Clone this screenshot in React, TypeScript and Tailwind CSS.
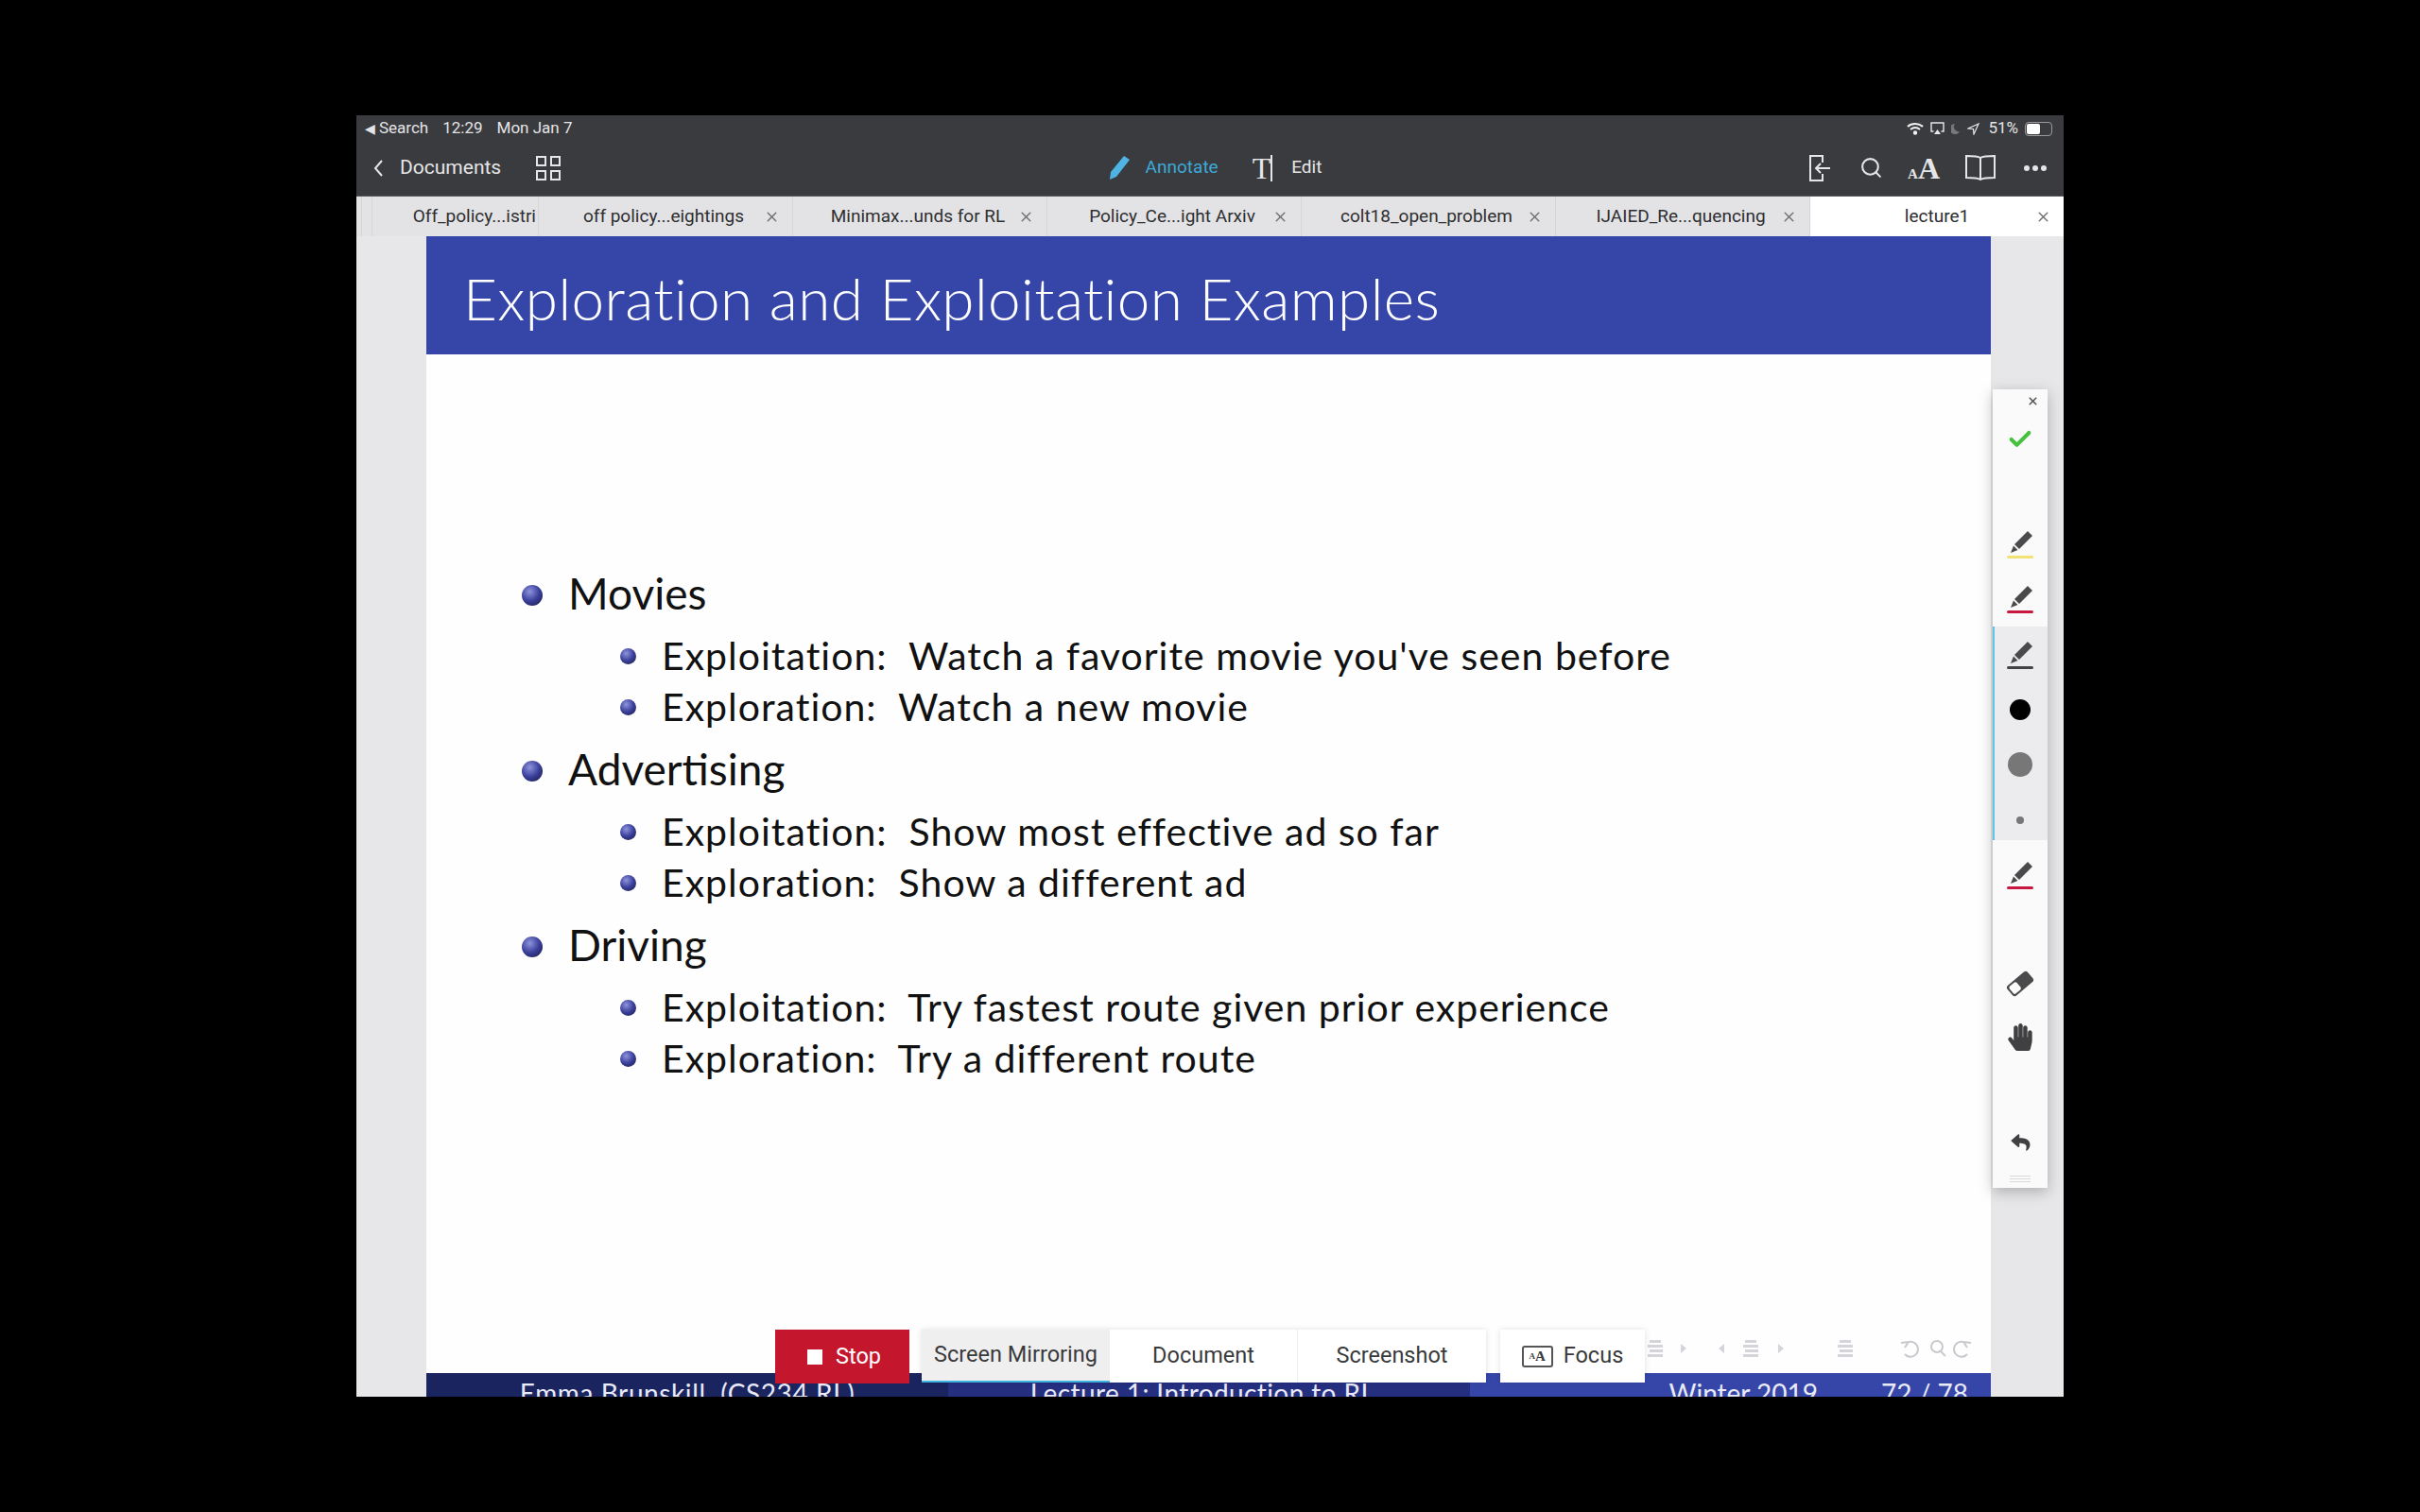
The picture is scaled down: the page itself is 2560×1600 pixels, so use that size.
import { Check, Search, X } from "lucide-react";
import { FaHandPaper, FaReply } from "react-icons/fa";

const TABS = ["off policy...eightings", "Minimax...unds for RL", "Policy_Ce...ight Arxiv", "colt18_open_problem", "IJAIED_Re...quencing"];

const SECTIONS = [
  { title: "Movies", items: ["Exploitation:  Watch a favorite movie you've seen before", "Exploration:  Watch a new movie"] },
  { title: "Advertising", items: ["Exploitation:  Show most effective ad so far", "Exploration:  Show a different ad"] },
  { title: "Driving", items: ["Exploitation:  Try fastest route given prior experience", "Exploration:  Try a different route"] },
];

function Pen({ line }: { line: string }) {
  return (
    <div className="flex flex-col items-center">
      <svg width="26" height="26" viewBox="0 0 26 26" className="ml-[2px]">
        <path d="M20 1 L25 6 L11 20 L6 15 Z" fill="#4a4a4d" />
        <path d="M5 16.5 L9.5 21 L2 24 Z" fill="#4a4a4d" />
      </svg>
      <div className={"mt-[1px] h-[3px] w-[28px] rounded-full " + line} />
    </div>
  );
}

function Ball({ big }: { big?: boolean }) {
  return (
    <span
      className={
        "mt-[3px] shrink-0 rounded-full bg-[radial-gradient(circle_at_38%_32%,#8e94dc,#3a3f9a_50%,#14173f)] " +
        (big ? "h-[22px] w-[22px]" : "h-[17px] w-[17px]")
      }
    />
  );
}

function Lines({ x }: { x: number }) {
  return (
    <g fill="#d4d4da">
      <rect x={x} y="5" width="12" height="3" />
      <rect x={x - 2} y="10" width="16" height="3" />
      <rect x={x} y="15" width="14" height="3" />
      <rect x={x - 2} y="20" width="16" height="3" />
    </g>
  );
}

export default function App() {
  return (
    <div className="flex h-screen items-center justify-center bg-black font-['Roboto',sans-serif]">
      <div className="relative flex h-[1356px] w-[1806px] flex-col overflow-hidden bg-[#e7e7e9]">
        {/* ios status bar */}
        <div className="flex h-[26px] items-center justify-between bg-[#3a3b3e] pl-[9px] pr-[12px] pt-[2px] text-[17px] text-[#e4e4e6]">
          <div className="flex items-center gap-[15px]">
            <span className="flex items-center gap-[4px]">
              <span className="text-[14px]">◀</span>Search
            </span>
            <span>12:29</span>
            <span>Mon Jan 7</span>
          </div>
          <div className="flex items-center gap-[7px]">
            <svg width="18" height="14" viewBox="0 0 18 14" fill="none" stroke="#f0f0f0" strokeWidth="2">
              <path d="M1 5 C5 1 13 1 17 5" />
              <path d="M4 8 C7 5.5 11 5.5 14 8" />
              <circle cx="9" cy="11.5" r="1.2" fill="#f0f0f0" />
            </svg>
            <svg width="15" height="14" viewBox="0 0 15 14" fill="none" stroke="#e8e8e8" strokeWidth="1.4">
              <path d="M3.5 10 H1 V1 H14 V10 H11.5" />
              <path d="M7.5 8 L11 13 H4 Z" fill="#e8e8e8" stroke="none" />
            </svg>
            <svg width="10" height="12" viewBox="0 0 10 12">
              <path d="M4 1 A5.5 5.5 0 1 0 9 9 A5 5 0 0 1 4 1 Z" fill="#77787b" />
            </svg>
            <svg width="13" height="13" viewBox="0 0 13 13" fill="none" stroke="#e8e8e8" strokeWidth="1.2">
              <path d="M12 1 L1 6 L6.5 6.5 L7 12 Z" />
            </svg>
            <span className="ml-[2px]">51%</span>
            <div className="flex h-[15px] w-[29px] items-center rounded-[4px] border border-[#9a9a9c] p-[1px]">
              <div className="h-full w-[14px] rounded-[2px] bg-white" />
            </div>
          </div>
        </div>

        {/* nav bar */}
        <div className="flex h-[59px] items-center bg-[#3a3b3e] text-[#e6e6e8]">
          <div className="flex flex-1 items-center pl-[17px]">
            <svg width="12" height="20" viewBox="0 0 12 20" fill="none" stroke="#e6e6e8" strokeWidth="2">
              <path d="M10 2 L3 10 L10 18" />
            </svg>
            <span className="ml-[17px] text-[21px]">Documents</span>
            <div className="ml-[37px] grid grid-cols-2 gap-[4px]">
              {[0, 1, 2, 3].map((i) => (
                <div key={i} className="h-[11px] w-[11px] border-2 border-[#e6e6e8]" />
              ))}
            </div>
          </div>
          <div className="ml-[11px] flex items-center">
            <svg width="24" height="27" viewBox="0 0 24 27">
              <path d="M17 1 L23 5 L9 23 L2 26 L3 18 Z" fill="#4fb4e4" />
            </svg>
            <span className="ml-[16px] text-[19px] text-[#3ea9d8]">Annotate</span>
            <div className="ml-[36px] flex items-center">
              <span className="font-['Liberation_Serif',serif] text-[32px] leading-none">T</span>
              <div className="h-[28px] w-[2px] bg-[#e6e6e8]" />
            </div>
            <span className="ml-[20px] text-[19px]">Edit</span>
          </div>
          <div className="flex flex-1 items-center justify-end pr-[18px]">
            <svg width="24" height="30" viewBox="0 0 24 30" fill="none" stroke="#e6e6e8" strokeWidth="2">
              <path d="M15 9 V2 H2 V28 H15 V21" />
              <path d="M23 15 H8 M13 10 L8 15 L13 20" />
            </svg>
            <Search className="ml-[30px] h-[25px] w-[25px]" strokeWidth={2} />
            <div className="ml-[26px] flex items-baseline font-['Liberation_Serif',serif] font-bold leading-none">
              <span className="text-[15px]">A</span>
              <span className="text-[32px]">A</span>
            </div>
            <svg width="34" height="30" viewBox="0 0 34 30" fill="none" stroke="#e6e6e8" strokeWidth="2" className="ml-[26px]">
              <path d="M17 4 C14 2 7 2 2 2 V25 C7 25 14 25 17 27 C20 25 27 25 32 25 V2 C27 2 20 2 17 4 Z" />
              <path d="M17 4 V27" />
            </svg>
            <div className="ml-[29px] flex gap-[3px]">
              {[0, 1, 2].map((i) => (
                <div key={i} className="h-[6px] w-[6px] rounded-full bg-[#e6e6e8]" />
              ))}
            </div>
          </div>
        </div>

        {/* document tabs */}
        <div className="flex h-[43px] border-t border-[#55565a] bg-[#e3e3e5] text-[19px] text-[#2e2e30]">
          <div className="relative flex w-[193px] items-center justify-end border-r border-[#d6d6d8] pr-[2px]">
            <div className="absolute left-[5px] top-0 h-full w-[12px] border-x border-[#d6d6d8]" />
            <span>Off_policy...istri</span>
          </div>
          {TABS.map((t) => (
            <div key={t} className="relative flex w-[269px] items-center justify-center border-r border-[#d6d6d8] pr-[4px]">
              <span>{t}</span>
              <X className="absolute right-[13px] h-[17px] w-[17px] text-[#707072]" strokeWidth={2} />
            </div>
          ))}
          <div className="relative flex flex-1 items-center justify-center bg-white">
            <span>lecture1</span>
            <X className="absolute right-[13px] h-[17px] w-[17px] text-[#707072]" strokeWidth={2} />
          </div>
        </div>

        {/* pdf page */}
        <div className="ml-[74px] flex min-h-0 w-[1655px] flex-1 flex-col overflow-hidden bg-[#fefefe] font-['Lato',sans-serif]">
          <div className="flex h-[125px] shrink-0 items-center bg-[#3646a8] pl-[39px] pt-[6px] text-[62px] font-light tracking-[0.4px] text-white">
            Exploration and Exploitation Examples
          </div>
          <div className="flex-1 pl-[101px] pt-[226px] text-[#111]">
            {SECTIONS.map((s) => (
              <div key={s.title} className="mb-[18px]">
                <div className="flex h-[54px] items-center gap-[27px] text-[46px] leading-none">
                  <Ball big />
                  <span>{s.title}</span>
                </div>
                <div className="mt-[16px] ml-[104px] flex flex-col gap-[10px]">
                  {s.items.map((it) => (
                    <div key={it} className="flex h-[44px] items-center gap-[27px] whitespace-pre text-[41px] leading-none tracking-[1px]">
                      <Ball />
                      <span>{it}</span>
                    </div>
                  ))}
                </div>
              </div>
            ))}
          </div>
          <div className="flex h-[25px] shrink-0 overflow-hidden whitespace-pre text-[28px] leading-[32px] text-[#e9eaf6]">
            <div className="flex w-[552px] justify-center bg-[#1a2560] pt-[5px] tracking-[0.6px]">Emma Brunskill  (CS234 RL)</div>
            <div className="flex w-[552px] justify-center bg-[#252f80] pt-[5px] pr-[14px] tracking-[0.4px]">Lecture 1: Introduction to RL</div>
            <div className="flex flex-1 justify-end gap-[67px] bg-[#3646a8] pt-[5px] pr-[24px]">
              <span>Winter 2019</span>
              <span>72 / 78</span>
            </div>
          </div>
        </div>

        {/* beamer nav symbols */}
        <svg width="370" height="30" viewBox="0 0 370 30" fill="none" className="absolute left-[1363px] top-[1291px]">
          <Lines x={5} />
          <path d="M38 9 L44 14 L38 19 Z M84 9 L78 14 L84 19 Z M141 9 L147 14 L141 19 Z" fill="#d4d4da" />
          <Lines x={106} />
          <Lines x={206} />
          <g stroke="#c8c8ce" strokeWidth="2">
            <path d="M279 7 A8 8 0 1 1 275 20 M279 7 L275 13 M279 7 L271 8" />
            <circle cx="309" cy="12" r="6" />
            <path d="M313 17 L318 22" />
            <path d="M337 7 A8 8 0 1 0 341 20 M337 7 L341 13 M337 7 L345 8" />
          </g>
        </svg>

        {/* screen recording bar */}
        <div className="absolute left-[443px] top-[1285px] flex h-[56px] items-start text-[23.5px] text-[#3a3a3c]">
          <div className="flex h-[57px] w-[142px] items-center justify-center gap-[14px] bg-[#c4172d] pl-[4px] text-white">
            <div className="h-[16px] w-[16px] bg-white" />
            <span>Stop</span>
          </div>
          <div className="ml-[13px] flex h-[56px] shadow-[0_0_6px_rgba(0,0,0,0.12)]">
            <div className="flex w-[199px] items-center justify-center border-b-2 border-[#3fb4e0] bg-[#efeff0]">Screen Mirroring</div>
            <div className="flex w-[199px] items-center justify-center border-r border-[#eeeeee] bg-white">Document</div>
            <div className="flex w-[199px] items-center justify-center bg-white">Screenshot</div>
          </div>
          <div className="ml-[15px] flex h-[56px] w-[153px] items-center justify-center gap-[11px] bg-white shadow-[0_0_6px_rgba(0,0,0,0.12)]">
            <div className="flex h-[23px] w-[33px] items-center justify-center rounded-[3px] border-2 border-[#555] font-['Liberation_Serif',serif] font-bold leading-none">
              <span className="text-[9px]">A</span>
              <span className="text-[15px]">A</span>
            </div>
            <span>Focus</span>
          </div>
        </div>

        {/* annotation toolbar */}
        <div className="absolute left-[1731px] top-[290px] flex h-[845px] w-[58px] flex-col items-center bg-[#fbfafb] shadow-[0_4px_14px_rgba(0,0,0,0.25)]">
          <X className="absolute right-[9px] top-[6px] h-[13px] w-[13px] text-[#555]" strokeWidth={3} />
          <Check className="mt-[39px] h-[28px] w-[28px] text-[#45c23c]" strokeWidth={3.5} />
          <div className="mt-[82px]">
            <Pen line="bg-[#f2e173]" />
          </div>
          <div className="mt-[28px]">
            <Pen line="bg-[#c9183f]" />
          </div>
          <div className="mt-[14px] flex w-full flex-col items-center border-l-2 border-[#5fc4e8] bg-[#ececee] pt-[15px] pb-[17px] pr-[2px]">
            <Pen line="bg-[#444]" />
            <div className="mt-[32px] h-[22px] w-[22px] rounded-full bg-black" />
            <div className="mt-[34px] h-[26px] w-[26px] rounded-full bg-[#777]" />
            <div className="mt-[42px] h-[8px] w-[8px] rounded-full bg-[#777]" />
          </div>
          <div className="mt-[22px]">
            <Pen line="bg-[#c9183f]" />
          </div>
          <svg width="30" height="30" viewBox="0 0 30 30" className="mt-[85px]">
            <g transform="rotate(-40 15 15)">
              <rect x="1" y="8" width="28" height="14" rx="3" fill="#4a4a4d" />
              <rect x="3" y="10" width="10" height="10" rx="2" fill="#fbfafb" />
            </g>
          </svg>
          <FaHandPaper className="mt-[27px] h-[29px] w-[26px] text-[#404042]" />
          <FaReply className="mt-[87px] h-[20px] w-[27px] text-[#404042]" />
          <div className="mt-[25px] flex w-[22px] flex-col gap-[2px]">
            <div className="h-[1px] bg-[#d8d8da]" />
            <div className="h-[1px] bg-[#d8d8da]" />
            <div className="h-[1px] bg-[#d8d8da]" />
          </div>
        </div>
      </div>
    </div>
  );
}
